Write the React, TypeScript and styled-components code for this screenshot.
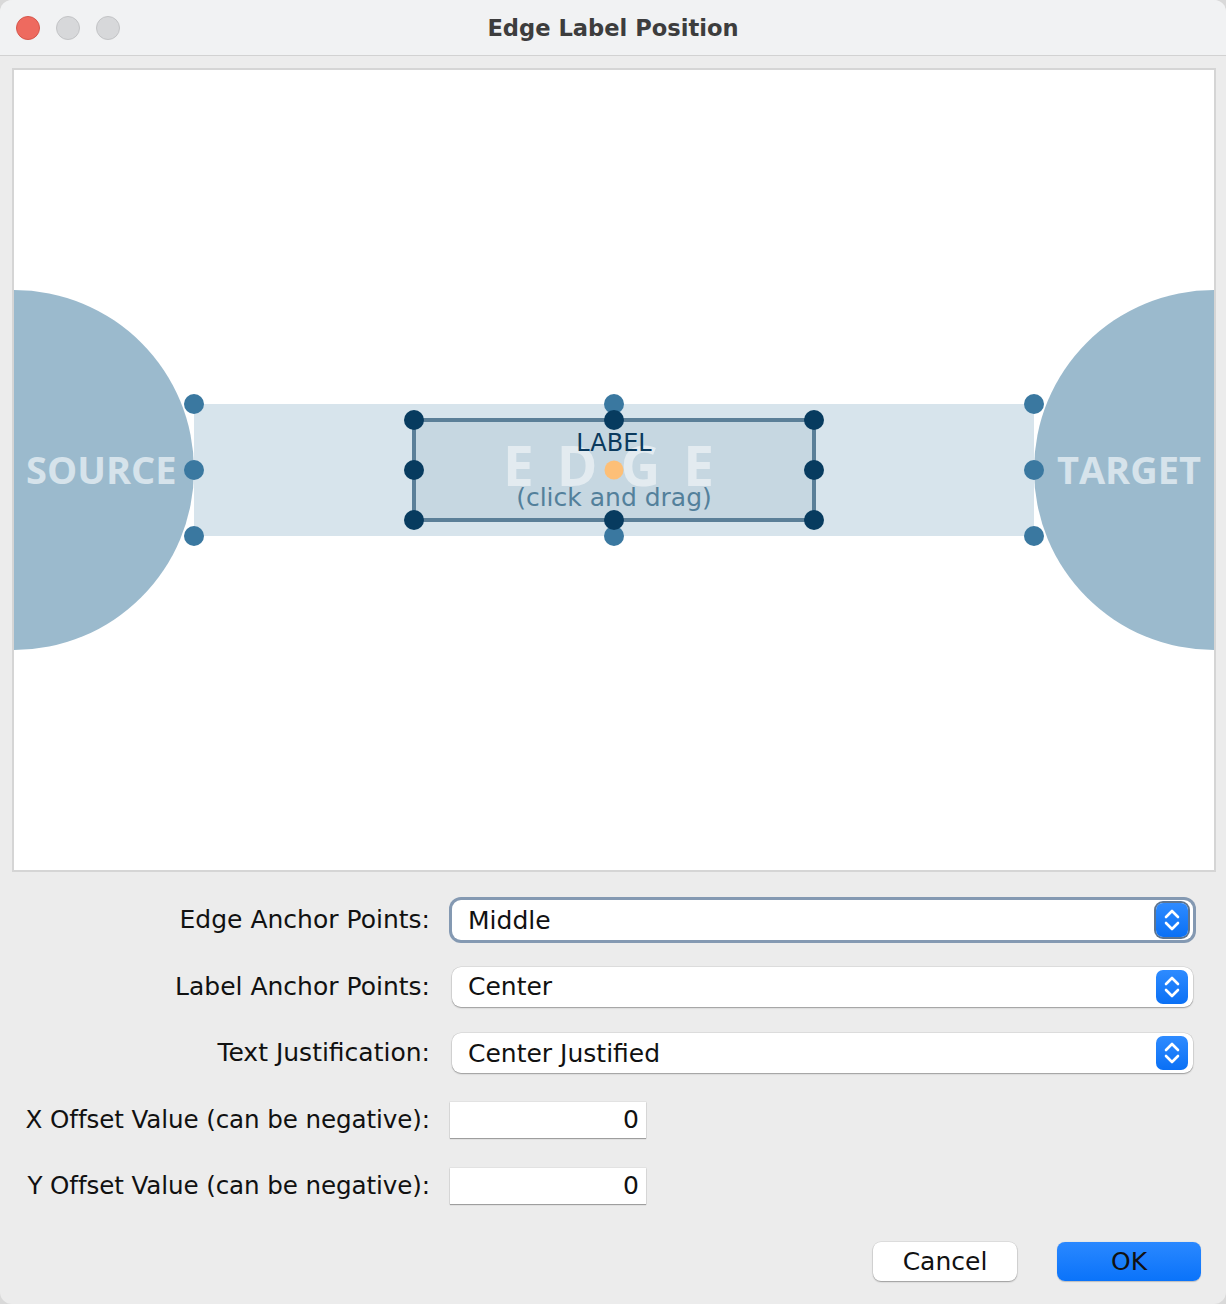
import React from "react";
import styled, { createGlobalStyle, css } from "styled-components";

const GlobalStyle = createGlobalStyle`
	html, body {
		margin: 0;
		padding: 0;
		background: #d9d9d9;
	}
	#root {
		width: 1226px;
		height: 1304px;
	}
`;

const uiFont = `"DejaVu Sans", "Liberation Sans", sans-serif`;

const Window = styled.div`
	width: 1226px;
	height: 1304px;
	box-sizing: border-box;
	display: flex;
	flex-direction: column;
	background: #ececec;
	border-radius: 12px;
	overflow: hidden;
	font-family: ${uiFont};
	color: #111;
`;

const TitleBar = styled.div`
	height: 56px;
	flex: none;
	display: flex;
	align-items: center;
	position: relative;
	background: #f1f2f3;
	border-bottom: 1px solid #d2d2d2;
	box-sizing: border-box;
	padding-left: 16px;
`;

const Lights = styled.div`
	display: flex;
	gap: 16px;
`;

const Light = styled.span<{ $close?: boolean }>`
	width: 24px;
	height: 24px;
	border-radius: 50%;
	box-sizing: border-box;
	background: ${(p) => (p.$close ? "#ee6a5f" : "#d7d8da")};
	border: 1px solid ${(p) => (p.$close ? "#d6564b" : "#c3c4c6")};
`;

const Title = styled.div`
	position: absolute;
	left: 0;
	right: 0;
	text-align: center;
	font-weight: bold;
	font-size: 22.6px;
	color: #3d3d3d;
	pointer-events: none;
`;

const Body = styled.div`
	flex: 1;
	display: flex;
	flex-direction: column;
	padding: 12px 0 0 12px;
`;

const Canvas = styled.div`
	width: 1200px;
	height: 800px;
	border: 2px solid #d5d5d5;
	background: #fff;
	svg {
		display: block;
	}
`;

const Form = styled.div`
	display: grid;
	grid-template-columns: 418px 1fr;
	column-gap: 22px;
	row-gap: 24.5px;
	margin-top: 27px;
	align-items: center;
`;

const Label = styled.div`
	font-size: 25px;
	text-align: right;
	height: 42px;
	line-height: 42px;
	white-space: nowrap;
`;

const OffsetLabel = styled(Label)`
	font-size: 24.6px;
	letter-spacing: -0.1px;
`;

const Select = styled.div<{ $focused?: boolean }>`
	width: 741px;
	height: 40px;
	box-sizing: border-box;
	display: flex;
	align-items: center;
	justify-content: space-between;
	padding: 0 5px 0 16px;
	background: #fff;
	border-radius: 9px;
	font-size: 25px;
	box-shadow: 0 0 0 0.5px rgba(0, 0, 0, 0.12), 0 1px 1.5px rgba(0, 0, 0, 0.3);
	${(p) =>
		p.$focused &&
		css`
			box-shadow: 0 0 0 3px #8499b2;
		`}
`;

const Stepper = styled.span<{ $focused?: boolean }>`
	width: 32px;
	height: 34px;
	border-radius: 7px;
	background: linear-gradient(#2e8bff, #0a70f5);
	display: flex;
	align-items: center;
	justify-content: center;
	${(p) =>
		p.$focused &&
		css`
			box-shadow: 0 0 0 2px #5d7591;
		`}
`;

const NumberField = styled.div`
	width: 196px;
	height: 36px;
	box-sizing: border-box;
	background: #fff;
	font-size: 25px;
	text-align: right;
	padding-right: 7px;
	line-height: 36px;
	box-shadow: 0 1px 1px rgba(0, 0, 0, 0.3), 0 0 0 0.5px rgba(0, 0, 0, 0.08);
	margin-left: -2px;
`;

const Footer = styled.div`
	margin-top: auto;
	display: flex;
	justify-content: flex-end;
	gap: 40px;
	padding: 0 25px 23px 0;
`;

const Button = styled.button<{ $primary?: boolean }>`
	width: 144px;
	height: 39px;
	border: none;
	border-radius: 8px;
	font-family: ${uiFont};
	font-size: 25px;
	color: #111;
	background: ${(p) => (p.$primary ? "linear-gradient(#2a88ff, #0a73fa)" : "#fff")};
	box-shadow: ${(p) =>
		p.$primary
			? "0 0.5px 1px rgba(0,0,0,0.2)"
			: "0 0 0 0.5px rgba(0,0,0,0.12), 0 1px 1.5px rgba(0,0,0,0.3)"};
`;

function Chevrons() {
	return (
		<svg width="20" height="26" viewBox="0 0 20 26" fill="none">
			<path d="M4 10 L10 4 L16 10" stroke="#fff" strokeWidth="2.6" strokeLinecap="round" strokeLinejoin="round" />
			<path d="M4 16 L10 22 L16 16" stroke="#fff" strokeWidth="2.6" strokeLinecap="round" strokeLinejoin="round" />
		</svg>
	);
}

const bandDots = [
	[180, 334], [180, 400], [180, 466],
	[1020, 334], [1020, 400], [1020, 466],
	[600, 334], [600, 466],
];

const boxDots = [
	[400, 350], [600, 350], [800, 350],
	[400, 400], [800, 400],
	[400, 450], [600, 450], [800, 450],
];

function EdgeDiagram() {
	const nodeFont = `"Open Sans", "DejaVu Sans", sans-serif`;
	const labelFont = `"DejaVu Sans", sans-serif`;
	return (
		<svg width="1200" height="800" viewBox="0 0 1200 800">
			<rect x="180" y="334" width="840" height="132" fill="#d7e4ec" />
			<circle cx="0" cy="400" r="180" fill="#9bbacd" />
			<circle cx="1200" cy="400" r="180" fill="#9bbacd" />
			<text x="12" y="414" fontFamily={nodeFont} fontWeight="bold" fontSize="38" fill="#d6e3eb">SOURCE</text>
			<text x="1187" y="414" textAnchor="end" fontFamily={nodeFont} fontWeight="bold" fontSize="38" fill="#d6e3eb">TARGET</text>
			<rect x="400" y="350" width="400" height="100" fill="#c6d7e1" stroke="#5b7f98" strokeWidth="4" />
			<text x="606" y="416" textAnchor="middle" fontFamily={nodeFont} fontWeight="bold" fontSize="55" letterSpacing="23" fill="#ffffff" fillOpacity="0.5">EDGE</text>
			<text x="600" y="381" textAnchor="middle" fontFamily={labelFont} fontSize="24" fill="#0b3a5d">LABEL</text>
			<text x="600" y="436" textAnchor="middle" fontFamily={labelFont} fontSize="25" fill="#53809b">(click and drag)</text>
			{bandDots.map(([x, y]) => (
				<circle key={`b${x}-${y}`} cx={x} cy={y} r="10" fill="#3a78a0" />
			))}
			{boxDots.map(([x, y]) => (
				<circle key={`d${x}-${y}`} cx={x} cy={y} r="10" fill="#073b5f" />
			))}
			<circle cx="600" cy="400" r="9.5" fill="#fdbf77" />
		</svg>
	);
}

export default function App() {
	return (
		<>
			<GlobalStyle />
			<Window>
				<TitleBar>
					<Lights>
						<Light $close />
						<Light />
						<Light />
					</Lights>
					<Title>Edge Label Position</Title>
				</TitleBar>
				<Body>
					<Canvas>
						<EdgeDiagram />
					</Canvas>
					<Form>
						<Label>Edge Anchor Points:</Label>
						<Select $focused>
							Middle
							<Stepper $focused>
								<Chevrons />
							</Stepper>
						</Select>
						<Label>Label Anchor Points:</Label>
						<Select>
							Center
							<Stepper>
								<Chevrons />
							</Stepper>
						</Select>
						<Label>Text Justification:</Label>
						<Select>
							Center Justified
							<Stepper>
								<Chevrons />
							</Stepper>
						</Select>
						<OffsetLabel>X Offset Value (can be negative):</OffsetLabel>
						<NumberField>0</NumberField>
						<OffsetLabel>Y Offset Value (can be negative):</OffsetLabel>
						<NumberField>0</NumberField>
					</Form>
					<Footer>
						<Button>Cancel</Button>
						<Button $primary>OK</Button>
					</Footer>
				</Body>
			</Window>
		</>
	);
}
